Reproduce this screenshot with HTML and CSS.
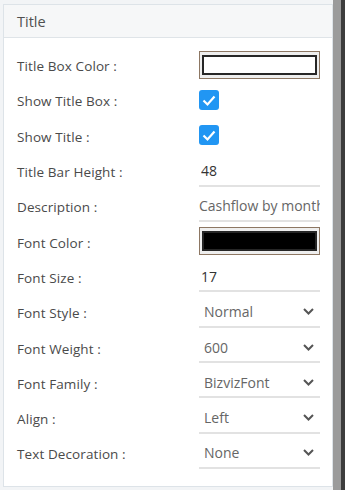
FILE: index.html
```html
<html>

<head>
    <link rel="stylesheet" href="styles.css">
</head>

<body>
    <div class="page">
        <div class="panel">
            <div class="panelHead">Title</div>
            <div class="panelBody">
                <div class="row">
                    <span class="lbl">Title Box Color :</span>
                    <div class="colorBox"><div class="swatch white"></div></div>
                </div>
                <div class="row">
                    <span class="lbl">Show Title Box :</span>
                    <div class="check"><svg width="20" height="20" viewBox="0 0 20 20"><path d="M4.5 10.5 L8.5 14.5 L15.5 6.5" fill="none" stroke="#fff" stroke-width="2.2"/></svg></div>
                </div>
                <div class="row">
                    <span class="lbl">Show Title :</span>
                    <div class="check"><svg width="20" height="20" viewBox="0 0 20 20"><path d="M4.5 10.5 L8.5 14.5 L15.5 6.5" fill="none" stroke="#fff" stroke-width="2.2"/></svg></div>
                </div>
                <div class="row">
                    <span class="lbl">Title Bar Height :</span>
                    <input class="field dark" type="text" value="48" />
                </div>
                <div class="row">
                    <span class="lbl">Description :</span>
                    <input class="field grey" type="text" value="Cashflow by month" />
                </div>
                <div class="row">
                    <span class="lbl">Font Color :</span>
                    <div class="colorBox"><div class="swatch black"></div></div>
                </div>
                <div class="row">
                    <span class="lbl">Font Size :</span>
                    <input class="field dark" type="text" value="17" />
                </div>
                <div class="row">
                    <span class="lbl">Font Style :</span>
                    <div class="field sel">Normal<svg class="chev" width="11" height="7" viewBox="0 0 11 7"><path d="M1 1 L5.5 5.5 L10 1" fill="none" stroke="#555" stroke-width="2"/></svg></div>
                </div>
                <div class="row">
                    <span class="lbl">Font Weight :</span>
                    <div class="field sel">600<svg class="chev" width="11" height="7" viewBox="0 0 11 7"><path d="M1 1 L5.5 5.5 L10 1" fill="none" stroke="#555" stroke-width="2"/></svg></div>
                </div>
                <div class="row">
                    <span class="lbl">Font Family :</span>
                    <div class="field sel">BizvizFont<svg class="chev" width="11" height="7" viewBox="0 0 11 7"><path d="M1 1 L5.5 5.5 L10 1" fill="none" stroke="#555" stroke-width="2"/></svg></div>
                </div>
                <div class="row">
                    <span class="lbl">Align :</span>
                    <div class="field sel">Left<svg class="chev" width="11" height="7" viewBox="0 0 11 7"><path d="M1 1 L5.5 5.5 L10 1" fill="none" stroke="#555" stroke-width="2"/></svg></div>
                </div>
                <div class="row">
                    <span class="lbl">Text Decoration :</span>
                    <div class="field sel">None<svg class="chev" width="11" height="7" viewBox="0 0 11 7"><path d="M1 1 L5.5 5.5 L10 1" fill="none" stroke="#555" stroke-width="2"/></svg></div>
                </div>
            </div>
        </div>
        <div class="scroll">
            <div class="track"></div>
            <div class="edge"></div>
        </div>
    </div>
</body>

</html>
```

FILE: styles.css
```css
body {
    margin: 0;
    padding: 0;
    overflow: hidden;
    background: #f2f4f6;
    font-family: "Open Sans", "Noto Sans", sans-serif;
}

.page {
    display: flex;
    height: 490px;
}

.panel {
    flex: 1;
    margin: 4px 0 3px 3px;
    border: 1px solid #dde3e8;
    background: #fff;
}

.panelHead {
    height: 32px;
    line-height: 34px;
    padding-left: 13px;
    background: #f6f7f8;
    border-bottom: 1px solid #dfe4e8;
    font-size: 14.5px;
    color: #505050;
}

.panelBody {
    padding: 9px 12px 0 13px;
}

.row {
    display: flex;
    align-items: center;
    justify-content: space-between;
    height: 35.3px;
}

.lbl {
    font-size: 13.5px;
    letter-spacing: 0.1px;
    color: #4a4a4a;
    padding-top: 3px;
}

.colorBox {
    box-sizing: border-box;
    width: 121px;
    height: 28px;
    border: 1px solid #8d7763;
    background: #eeeeee;
    padding: 3px 2px;
}

.swatch {
    height: 100%;
    box-sizing: border-box;
    border: 2px solid #262626;
}

.white {
    background: #fff;
}

.black {
    background: #000;
}

.check {
    width: 121px;
    height: 20px;
}

.check svg {
    display: block;
    background: #2196f3;
    border-radius: 3px;
}

.field {
    box-sizing: border-box;
    width: 121px;
    height: 30px;
    margin: 2px 0 0 0;
    padding: 0 0 0 2px;
    border: none;
    border-bottom: 2px solid #e2e2e2;
    outline: none;
    background: transparent;
    font-family: "Open Sans", "Noto Sans", sans-serif;
    font-size: 14px;
    display: flex;
    align-items: center;
    white-space: nowrap;
    overflow: hidden;
}

.dark {
    color: #333;
}

.grey {
    color: #666;
    padding-left: 0;
}

.sel {
    padding-left: 5px;
    color: #666;
    justify-content: space-between;
    padding-right: 6px;
}

.scroll {
    display: flex;
    width: 12px;
}

.track {
    width: 8px;
    background: #9b9b9b;
}

.edge {
    flex: 1;
    background: #3d3d3d;
}
```
